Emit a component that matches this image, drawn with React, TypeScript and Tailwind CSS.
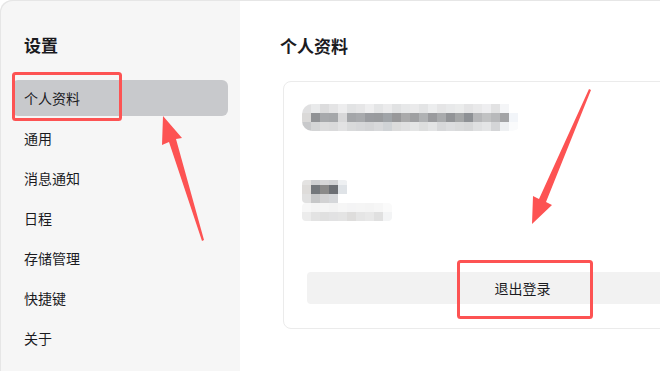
const font = { fontFamily: '"Noto Sans CJK SC", "Noto Sans", sans-serif' };

const menu = ["个人资料", "通用", "消息通知", "日程", "存储管理", "快捷键", "关于"];

// 打码区域的像素块（每块 9px）
const rowA = ["#e0e0e1", "#e9eaeb", "#dcdcdd", "#e4e4e5", "#ededee", "#e2e3e4", "#e6e6e7", "#eeeeef", "#e4e5e6", "#ebebec", "#e1e2e3", "#e7e8e9", "#eaeaeb", "#e3e4e5", "#ecedee", "#e5e5e6", "#e8e9ea", "#ebecec", "#e4e4e5", "#e9e9ea", "#eeeef0", "#e2e2e3", "#f4f5f7", "#ffffff"];
const rowB = ["#dad9d8", "#909295", "#a7a9ac", "#a5a7aa", "#d8d8d9", "#a4a6a9", "#a8aaad", "#9a9ca0", "#999b9e", "#a0a4a8", "#98989a", "#aaaaab", "#9fa0a2", "#b0b2b4", "#9a9b9e", "#a9abad", "#929497", "#a4a6a7", "#8e9195", "#b6b7b9", "#c1c2c3", "#b8b9bb", "#a3a4a6", "#f2f5f9"];
const rowC = ["#c8c9cb", "#d4d5d6", "#dcdcdd", "#dadadb", "#e2e2e3", "#d9dadb", "#d6d7d9", "#d3d4d6", "#d8d9db", "#d0d3d6", "#dcdcdc", "#e0e0e1", "#e4e5e5", "#dddede", "#e3e4e5", "#d7d8da", "#dcdddf", "#d9dadb", "#d6d7d8", "#dfe0e1", "#e4e5e6", "#d4d5d7", "#eef0f2", "#fafbfc"];

const nameRows = [
  ["#e4e3e2", "#cfd0d2", "#d7d7d8", "#d2d3d5", "#eef0f2"],
  ["#dedcda", "#73777b", "#8b8a89", "#6c6f74", "#dfe3e7"],
  ["#e1e1e1", "#c6c7c8", "#d2d2d3", "#d5d7da"],
];
const subRows = [
  ["#f7f7f7", "#f4f4f4", "#f5f5f5", "#f3f3f3", "#f6f6f6", "#f4f4f5", "#f5f5f5", "#f4f4f4", "#f6f6f6", "#fafafa"],
  ["#ececec", "#e3e3e3", "#e0e0e0", "#e2e2e3", "#e4e4e4", "#dedddc", "#e5e5e5", "#e8e8e8", "#e0e0e0", "#f3f4f5"],
];

function Blur1() {
  return (
    <svg width="220" height="27" className="block">
      <defs>
        <clipPath id="b1">
          <rect x="0" y="0" width="220" height="27" rx="10" />
        </clipPath>
      </defs>
      <g clipPath="url(#b1)">
        {rowA.map((c, i) => (
          <rect key={"a" + i} x={i * 9} y={0} width={9} height={9} fill={c} />
        ))}
        {rowB.map((c, i) => (
          <rect key={"b" + i} x={i * 9} y={9} width={9} height={9} fill={c} />
        ))}
        {rowC.map((c, i) => (
          <rect key={"c" + i} x={i * 9} y={18} width={9} height={9} fill={c} />
        ))}
      </g>
    </svg>
  );
}

function Blur2() {
  return (
    <svg width="92" height="41" className="block">
      <defs>
        <clipPath id="b2">
          <rect x="0" y="0" width="46" height="23" rx="4" />
          <rect x="0" y="23" width="90" height="18" rx="4" />
        </clipPath>
      </defs>
      <g clipPath="url(#b2)">
        {nameRows.map((row, r) =>
          row.map((c, i) => (
            <rect key={"n" + r + i} x={i * 9} y={r === 0 ? 0 : r === 1 ? 5 : 14} width={9} height={r === 0 ? 5 : 9} fill={c} />
          ))
        )}
        {subRows.map((row, r) =>
          row.map((c, i) => (
            <rect key={"s" + r + i} x={i * 9} y={23 + r * 9} width={9} height={9} fill={c} />
          ))
        )}
      </g>
    </svg>
  );
}

function Annotations() {
  const red = "#fd5353";
  return (
    <svg className="absolute inset-0 pointer-events-none" width="660" height="371">
      <rect x="13.5" y="73.5" width="107" height="46" rx="2" fill="none" stroke={red} strokeWidth="3" />
      <rect x="458.5" y="261.5" width="133" height="56" rx="2" fill="none" stroke={red} strokeWidth="3" />
      <polygon
        points="163,116 182,138 176,139 204,240 202,241 169,142 162,145"
        fill={red}
      />
      <polygon
        points="591,90 546,202 552,205 532,224 533,196 539,199 589,89"
        fill={red}
      />
    </svg>
  );
}

export default function App() {
  return (
    <div className="relative w-[660px] h-[371px] overflow-hidden bg-white text-[#1b1b1f]" style={font}>
      <div className="flex h-full rounded-tl-[12px] overflow-hidden">
        {/* 侧边栏 */}
        <aside className="w-[240px] shrink-0 bg-[#f6f6f6] pt-[33px]">
          <h1 className="pl-6 text-[17px] leading-6 font-bold">设置</h1>
          <nav className="mt-[23px] px-3 flex flex-col gap-1">
            {menu.map((item, i) => (
              <div
                key={item}
                className={
                  "h-9 flex items-center pl-3 rounded-md text-[14px] " +
                  (i === 0 ? "bg-[#c8c9cc]" : "")
                }
              >
                {item}
              </div>
            ))}
          </nav>
        </aside>

        {/* 主内容 */}
        <main className="flex-1 bg-white pt-[34px] pl-[43px]">
          <h2 className="-ml-[3px] text-[17px] leading-6 font-bold">个人资料</h2>
          <div className="mt-[23px] w-[480px] h-[248px] border border-[#ebebeb] rounded-lg pl-[23px] pr-6 pt-[22px] flex flex-col">
            <div className="-ml-[5px]">
              <Blur1 />
            </div>
            <div className="-ml-[5px] mt-[49px]">
              <Blur2 />
            </div>
            <button className="mt-[51px] h-8 w-full rounded bg-[#f2f2f2] text-[14px] text-[#1b1b1f]">
              退出登录
            </button>
          </div>
        </main>
      </div>
      {/* 窗口左上角的细边框 */}
      <div className="absolute inset-0 rounded-tl-[12px] pointer-events-none shadow-[inset_1px_1px_0_#e6e6e6]" />
      <Annotations />
    </div>
  );
}
